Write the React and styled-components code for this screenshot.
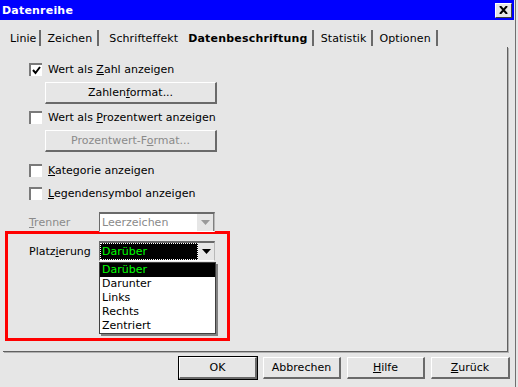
import styled, { createGlobalStyle } from "styled-components";

const Global = createGlobalStyle`
  html, body { margin: 0; padding: 0; background: #e6e6e6; }
  body {
    font-family: "DejaVu Sans", "Liberation Sans", sans-serif;
    font-size: 11px;
    color: #000;
  }
`;

const Frame = styled.div`
  width: 515px;
  height: 387px;
  border-right: 1px solid #707070;
  display: flex;
  flex-direction: column;
  background: #e6e6e6;
`;

const TitleBar = styled.div`
  height: 20px;
  margin-right: 1px;
  background: #0000ff;
  color: #fff;
  font-weight: bold;
  font-size: 11px;
  letter-spacing: 0.2px;
  display: flex;
  align-items: center;
  justify-content: space-between;
  padding: 0 2px 0 2px;
`;

const CloseBtn = styled.div`
  width: 15px;
  height: 13px;
  background: #e6e6e6;
  border-top: 1px solid #fff;
  border-left: 1px solid #fff;
  border-right: 1px solid #404040;
  border-bottom: 1px solid #404040;
  display: flex;
  align-items: center;
  justify-content: center;
`;

const Tabs = styled.div`
  display: flex;
  padding: 10px 0 0 10px;
  height: 17px;
`;

const Tab = styled.div`
  height: 16px;
  display: flex;
  align-items: center;
  padding: 0 ${(p) => p.$pr}px 0 ${(p) => p.$pl}px;
  font-weight: ${(p) => (p.$active ? "bold" : "normal")};
  letter-spacing: ${(p) => (p.$active ? "0.2px" : "0.1px")};
  border-right: ${(p) => (p.$sep ? "2px solid #6a6a6a" : "none")};
`;

const Panel = styled.div`
  margin-left: 3px;
  width: 505px;
  height: 305px;
  border-right: 1px solid #606060;
  border-bottom: 1px solid #606060;
  box-shadow: 1px 1px 0 #b0b0b0;
  padding: 15px 0 0 26px;
  box-sizing: border-box;
  display: flex;
  flex-direction: column;
  align-items: flex-start;
`;

const Row = styled.div`
  display: flex;
  align-items: center;
  height: 14px;
  margin-top: ${(p) => p.$mt || 0}px;
  color: ${(p) => (p.$disabled ? "#8a8a8a" : "#000")};
`;

const Box = styled.div`
  width: 11px;
  height: 11px;
  background: #fff;
  border-top: 2px solid #7a7a7a;
  border-left: 2px solid #7a7a7a;
  margin-right: 6px;
  display: flex;
  align-items: center;
  justify-content: center;
`;

const PushButton = styled.div`
  box-sizing: border-box;
  width: ${(p) => p.$w}px;
  height: 22px;
  margin-top: ${(p) => p.$mt || 0}px;
  margin-left: ${(p) => p.$ml || 0}px;
  display: flex;
  align-items: center;
  justify-content: center;
  background: #e6e6e6;
  color: ${(p) => (p.$disabled ? "#8a8a8a" : "#000")};
  border-top: 1px solid #fff;
  border-left: 1px solid #fff;
  border-right: 2px solid #6a6a6a;
  border-bottom: 2px solid #6a6a6a;
  outline: ${(p) => (p.$default ? "1px solid #000" : "none")};
  outline-offset: 0;
`;

const ComboRow = styled.div`
  display: flex;
  align-items: center;
  margin-top: ${(p) => p.$mt || 0}px;
`;

const Label = styled.div`
  width: 70px;
  color: ${(p) => (p.$disabled ? "#8a8a8a" : "#000")};
`;

const Combo = styled.div`
  position: relative;
  box-sizing: border-box;
  width: 116px;
  height: 20px;
  display: flex;
  border-top: 2px solid #6a6a6a;
  border-left: 1px solid #6a6a6a;
  border-right: 1px solid #b8b8b8;
  border-bottom: 1px solid #fff;
`;

const Field = styled.div`
  flex: 1;
  display: flex;
  align-items: center;
  padding-left: 2px;
  box-sizing: border-box;
  background: ${(p) => (p.$focus ? "#000" : "#fff")};
  color: ${(p) => (p.$focus ? "#00ff00" : "#8a8a8a")};
  outline: ${(p) => (p.$focus ? "1px dotted #fff" : "none")};
  outline-offset: -1px;
`;

const ArrowBtn = styled.div`
  width: 16px;
  display: flex;
  align-items: center;
  justify-content: center;
  background: #e6e6e6;
  border-left: ${(p) => (p.$flat ? "none" : "1px solid #fff")};
  border-right: ${(p) => (p.$flat ? "none" : "1px solid #808080")};
`;

const Highlight = styled.div`
  box-sizing: border-box;
  width: 225px;
  height: 110px;
  margin: -1px 0 0 -24px;
  border: 3px solid #ff0000;
  padding: 7px 0 0 21px;
`;

const List = styled.div`
  position: absolute;
  top: 19px;
  left: -1px;
  width: 115px;
  background: #fff;
  border: 1px solid #404040;
  box-shadow: 2px 2px 0 #808080;
  z-index: 2;
`;

const Item = styled.div`
  height: 14px;
  line-height: 14px;
  padding-left: 2px;
  background: ${(p) => (p.$selected ? "#000" : "#fff")};
  color: ${(p) => (p.$selected ? "#00ff00" : "#000")};
`;

const Footer = styled.div`
  display: flex;
  gap: 6px;
  padding: 5px 0 0 179px;
`;

const U = styled.span`
  text-decoration: underline;
`;

function Check({ checked }) {
  return (
    <Box>
      {checked && (
        <svg width="9" height="9" viewBox="0 0 9 9">
          <path d="M1 4 L3.5 7 L8 1" stroke="#000" strokeWidth="2" fill="none" />
        </svg>
      )}
    </Box>
  );
}

function Arrow({ color }) {
  return (
    <svg width="9" height="5" viewBox="0 0 9 5">
      <path d="M0 0 H9 L4.5 5 Z" fill={color} />
    </svg>
  );
}

export default function App() {
  const options = ["Darüber", "Darunter", "Links", "Rechts", "Zentriert"];
  return (
    <>
      <Global />
      <Frame>
        <TitleBar>
          <span>Datenreihe</span>
          <CloseBtn>
            <svg width="9" height="8" viewBox="0 0 9 8">
              <path d="M1 0 L8 8 M8 0 L1 8" stroke="#000" strokeWidth="2" />
            </svg>
          </CloseBtn>
        </TitleBar>
        <Tabs>
          <Tab $pl={0} $pr={3} $sep>Linie</Tab>
          <Tab $pl={6} $pr={5} $sep>Zeichen</Tab>
          <Tab $pl={10} $pr={10}>Schrifteffekt</Tab>
          <Tab $pl={0} $pr={4} $active $sep>Datenbeschriftung</Tab>
          <Tab $pl={7} $pr={5} $sep>Statistik</Tab>
          <Tab $pl={6} $pr={5} $sep>Optionen</Tab>
        </Tabs>
        <Panel>
          <Row>
            <Check checked />
            <span>Wert als <U>Z</U>ahl anzeigen</span>
          </Row>
          <PushButton $w={172} $ml={16} $mt={6}>
            <span>Zahlen<U>f</U>ormat...</span>
          </PushButton>
          <Row $mt={6}>
            <Check />
            <span>Wert als <U>P</U>rozentwert anzeigen</span>
          </Row>
          <PushButton $w={172} $ml={16} $mt={6} $disabled>
            <span>Prozentwert-F<U>o</U>rmat...</span>
          </PushButton>
          <Row $mt={11}>
            <Check />
            <span><U>K</U>ategorie anzeigen</span>
          </Row>
          <Row $mt={9}>
            <Check />
            <span><U>L</U>egendensymbol anzeigen</span>
          </Row>
          <ComboRow $mt={12}>
            <Label $disabled><U>T</U>renner</Label>
            <Combo>
              <Field>Leerzeichen</Field>
              <ArrowBtn>
                <Arrow color="#9a9a9a" />
              </ArrowBtn>
            </Combo>
          </ComboRow>
          <Highlight>
            <ComboRow>
              <Label>Platz<U>i</U>erung</Label>
              <Combo>
                <Field $focus>Darüber</Field>
                <ArrowBtn $flat>
                  <Arrow color="#000" />
                </ArrowBtn>
                <List>
                  {options.map((o, i) => (
                    <Item key={o} $selected={i === 0}>{o}</Item>
                  ))}
                </List>
              </Combo>
            </ComboRow>
          </Highlight>
        </Panel>
        <Footer>
          <PushButton $w={78} $default>OK</PushButton>
          <PushButton $w={78}>Abbrechen</PushButton>
          <PushButton $w={78}><span><U>H</U>ilfe</span></PushButton>
          <PushButton $w={79}><span><U>Z</U>urück</span></PushButton>
        </Footer>
      </Frame>
    </>
  );
}
